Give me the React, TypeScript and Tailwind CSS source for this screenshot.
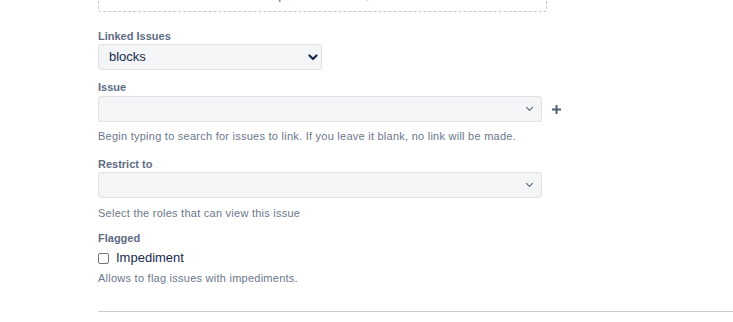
import React from 'react';

const Chevron = ({ bold }: { bold?: boolean }) => (
  <svg
    width={bold ? 10 : 9}
    height={bold ? 7 : 6}
    viewBox="0 0 10 7"
    fill="none"
    stroke={bold ? '#172b4d' : '#505f79'}
    strokeWidth={bold ? 2.2 : 1.2}
    strokeLinecap="round"
    strokeLinejoin="round"
  >
    <path d="M1.5 1.5 5 5l3.5-3.5" />
  </svg>
);

const Label = ({ children }: { children: React.ReactNode }) => (
  <div className="text-[11px] font-bold leading-[14px] text-[#5e6c84]">{children}</div>
);

const Help = ({ children }: { children: React.ReactNode }) => (
  <div className="text-[11px] leading-[14px] tracking-[0.25px] text-[#6b778c]">{children}</div>
);

const App: React.FC = () => {
  return (
    <div
      className="w-[733px] h-[322px] overflow-hidden bg-white pl-[98px]"
      style={{ fontFamily: '"Liberation Sans", Arial, sans-serif' }}
    >
      {/* Attachment drop zone, mostly scrolled off */}
      <div className="-mt-[30px] h-[42px] w-[449px] border border-dashed border-[#c1c7d0] rounded-[3px] flex items-end justify-center pb-[8px] gap-[24px] text-[13px] text-[#5e6c84]">
        <span className="leading-[16px]">⊂⊃</span>
        <span className="leading-[16px]">Drop files to attach, or browse.</span>
      </div>

      <div className="mt-[17px]">
        <Label>Linked Issues</Label>
        <div className="mt-[1px] w-[224px] h-[26px] bg-[#f4f5f7] border border-[#dfe1e6] rounded-[3px] flex items-center justify-between pl-[10px] pr-[3px]">
          <span className="text-[13px] text-[#172b4d]">blocks</span>
          <Chevron bold />
        </div>
      </div>

      <div className="mt-[10px]">
        <Label>Issue</Label>
        <div className="mt-[2px] flex items-center gap-[10px]">
          <div className="w-[444px] h-[26px] bg-[#f4f5f7] border border-[#dfe1e6] rounded-[3px] flex items-center justify-end pr-[7px]">
            <Chevron />
          </div>
          <svg width="9" height="9" viewBox="0 0 9 9" fill="#505f79">
            <rect x="3.5" y="0" width="2" height="9" />
            <rect x="0" y="3.5" width="9" height="2" />
          </svg>
        </div>
        <div className="mt-[7px]">
          <Help>Begin typing to search for issues to link. If you leave it blank, no link will be made.</Help>
        </div>
      </div>

      <div className="mt-[14px]">
        <Label>Restrict to</Label>
        <div className="mt-[1px] w-[444px] h-[26px] bg-[#f4f5f7] border border-[#dfe1e6] rounded-[3px] flex items-center justify-end pr-[7px]">
          <Chevron />
        </div>
        <div className="mt-[8px]">
          <Help>Select the roles that can view this issue</Help>
        </div>
      </div>

      <div className="mt-[11px]">
        <Label>Flagged</Label>
        <label className="mt-[4px] flex items-center gap-[7px]">
          <span className="w-[11px] h-[11px] border border-[#767676] rounded-[2px] bg-white" />
          <span className="text-[13px] leading-[18px] text-[#172b4d]">Impediment</span>
        </label>
        <div className="mt-[4px]">
          <Help>Allows to flag issues with impediments.</Help>
        </div>
      </div>

      <div className="mt-[26px] border-t border-[#cccccc]" />
    </div>
  );
};

export default App;
